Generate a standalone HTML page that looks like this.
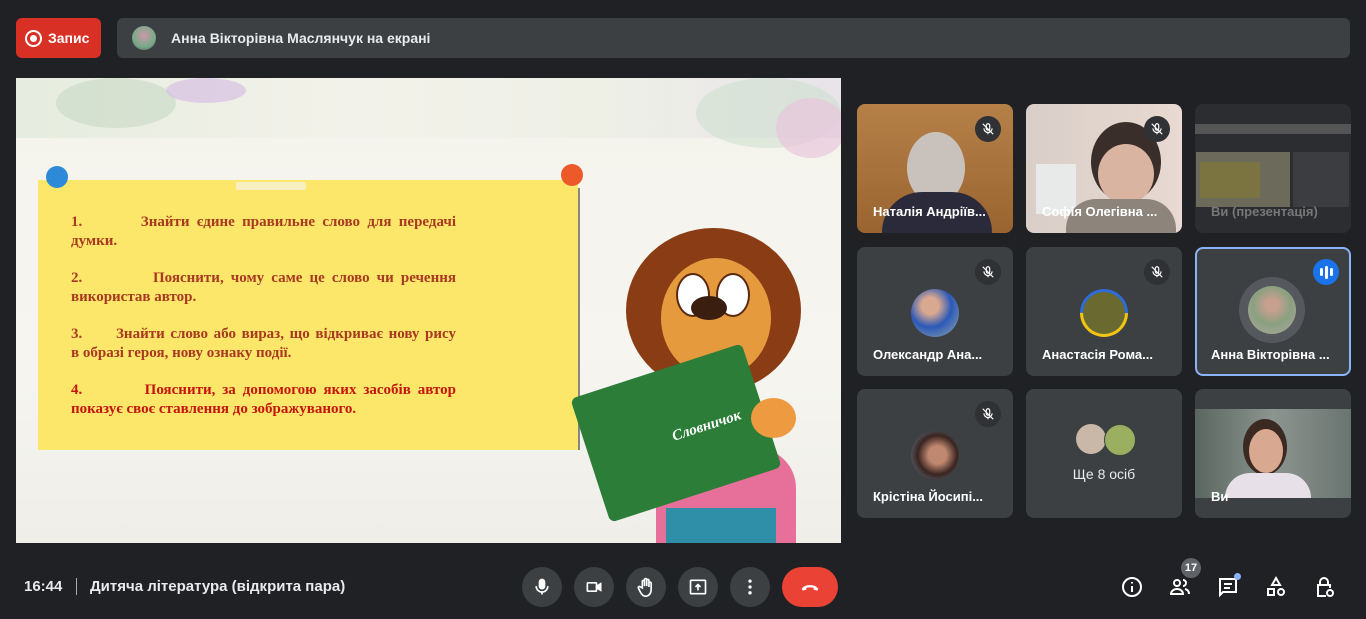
<!DOCTYPE html>
<html><head><meta charset="utf-8"><style>
*{margin:0;padding:0;box-sizing:border-box}
body{width:1366px;height:619px;background:#202124;font-family:"Liberation Sans",sans-serif;position:relative;overflow:hidden;color:#e8eaed}
.abs{position:absolute}
.rec{left:16px;top:18px;width:85px;height:40px;background:#d93025;border-radius:6px;color:#fff;font-weight:bold;font-size:14px;display:flex;align-items:center;padding-left:9px}
.rec i{width:17px;height:17px;border-radius:50%;border:2px solid #fff;display:inline-block;margin-right:6px;position:relative}
.rec i:after{content:"";position:absolute;left:3px;top:3px;width:7px;height:7px;border-radius:50%;background:#fff}
.banner{left:117px;top:18px;width:1233px;height:40px;background:#3c4043;border-radius:6px;display:flex;align-items:center;font-weight:bold;font-size:14px;color:#e8eaed}
.banner .av{width:24px;height:24px;border-radius:50%;background:radial-gradient(circle at 50% 40%,#c9a,#7a8 60%,#556);margin:0 15px}
.slide{left:16px;top:78px;width:825px;height:465px;background:linear-gradient(#f4f3ec,#f6f5f0 60%,#efeee9);overflow:hidden}
.note{left:22px;top:102px;width:540px;height:270px;background:#fde76a}
.shadow{left:540px;top:110px;width:24px;height:262px;background:linear-gradient(90deg,#fde76a,#777 60%,#888)}
.ln{font-family:"Liberation Serif",serif;font-weight:bold;font-size:15px;color:#a83a22;line-height:19px;position:absolute;left:55px;width:385px;white-space:nowrap}
.j{text-align:justify;text-align-last:justify;white-space:normal}
.tile{background:#3c4043;border-radius:8px;overflow:hidden;width:156px;height:129px}
.name{position:absolute;left:16px;bottom:14px;font-size:13px;font-weight:bold;color:#fff;white-space:nowrap}
.mute{position:absolute;right:12px;top:12px;width:26px;height:26px;border-radius:50%;background:#2f3134;display:flex;align-items:center;justify-content:center}
.avt{position:absolute;left:54px;top:42px;width:48px;height:48px;border-radius:50%}
.btn{width:40px;height:40px;border-radius:50%;background:#3c4043;top:567px;display:flex;align-items:center;justify-content:center}
.ico{top:575px;width:24px;height:24px}
</style></head><body>
<div class="abs rec"><i></i>Запис</div>
<div class="abs banner"><span class="av"></span>Анна Вікторівна Маслянчук на екрані</div>

<div class="abs slide">
 <div class="abs" style="left:0;top:0;width:825px;height:60px;background:linear-gradient(90deg,#e6ecdf,#f3f2ea 40%,#eef0e6 70%,#e8e4ea)"></div>
 <div class="abs" style="left:40px;top:0;width:120px;height:50px;border-radius:50%;background:#c8d9c4;opacity:.6"></div>
 <div class="abs" style="left:150px;top:0;width:80px;height:25px;border-radius:50%;background:#d7c0e2;opacity:.7"></div>
 <div class="abs" style="left:680px;top:0;width:145px;height:70px;border-radius:50%;background:#cfe0cf;opacity:.6"></div>
 <div class="abs" style="left:760px;top:20px;width:70px;height:60px;border-radius:50%;background:#e8c6dc;opacity:.7"></div>
 <div class="abs shadow"></div>
 <div class="abs note"></div>
 <div class="abs" style="left:220px;top:104px;width:70px;height:8px;background:#f8efc0;border-radius:2px"></div>
 <div class="abs" style="left:30px;top:88px;width:22px;height:22px;border-radius:50%;background:#2c8ad8"></div>
 <div class="abs" style="left:545px;top:86px;width:22px;height:22px;border-radius:50%;background:#ec5a2a"></div>
 <div class="ln j" style="top:135px">1.&nbsp;&nbsp;&nbsp;&nbsp;&nbsp;&nbsp;&nbsp; Знайти єдине правильне слово для передачі</div>
 <div class="ln" style="top:154px">думки.</div>
 <div class="ln j" style="top:191px">2.&nbsp;&nbsp;&nbsp;&nbsp;&nbsp;&nbsp;&nbsp;&nbsp;&nbsp; Пояснити, чому саме це слово чи речення</div>
 <div class="ln" style="top:210px">використав автор.</div>
 <div class="ln j" style="top:247px">3.&nbsp;&nbsp;&nbsp;&nbsp;&nbsp; Знайти слово або вираз, що відкриває нову рису</div>
 <div class="ln" style="top:266px">в образі героя, нову ознаку події.</div>
 <div class="ln j" style="top:303px;color:#c4160e">4.&nbsp;&nbsp;&nbsp;&nbsp;&nbsp;&nbsp;&nbsp;&nbsp; Пояснити, за допомогою яких засобів автор</div>
 <div class="ln" style="top:322px;color:#c4160e">показує своє ставлення до зображуваного.</div>
 <!-- lion -->
 <div class="abs" style="left:610px;top:150px;width:175px;height:165px;border-radius:50%;background:#8a3c14"></div>
 <div class="abs" style="left:645px;top:180px;width:110px;height:120px;border-radius:50%;background:#e59a3e"></div>
 <div class="abs" style="left:660px;top:195px;width:34px;height:44px;border-radius:50%;background:#fff;border:2px solid #5a2a10"></div>
 <div class="abs" style="left:700px;top:195px;width:34px;height:44px;border-radius:50%;background:#fff;border:2px solid #5a2a10"></div>
 <div class="abs" style="left:675px;top:218px;width:36px;height:24px;border-radius:50%;background:#3a1e10"></div>
 <div class="abs" style="left:640px;top:370px;width:140px;height:95px;border-radius:40px 40px 0 0;background:#e6709a"></div>
 <div class="abs" style="left:650px;top:430px;width:110px;height:40px;background:#2f8fa8"></div>
 <div class="abs" style="left:570px;top:290px;width:180px;height:130px;background:#2c7d38;transform:rotate(-18deg);border-radius:6px"></div>
 <div class="abs" style="left:655px;top:340px;font-family:'Liberation Serif',serif;font-style:italic;font-weight:bold;color:#fff;font-size:15px;transform:rotate(-18deg)">Словничок</div>
 <div class="abs" style="left:735px;top:320px;width:45px;height:40px;border-radius:50%;background:#ee9a40"></div>
</div>

<!-- tiles -->
<div class="abs tile" style="left:857px;top:104px;background:linear-gradient(#b58048,#9a6430)">
 <div class="abs" style="left:50px;top:28px;width:58px;height:72px;border-radius:50%;background:#c9c2bc"></div>
 <div class="abs" style="left:25px;top:88px;width:110px;height:50px;border-radius:40px 40px 0 0;background:#2a2a3a"></div>
 <div class="mute"><svg width="14" height="14" viewBox="0 0 24 24" fill="none" stroke="#fff" stroke-width="2"><rect x="9" y="3" width="6" height="11" rx="3"/><path d="M5 11a7 7 0 0014 0M12 18v3M3 3l18 18"/></svg></div>
 <div class="name">Наталія Андріїв...</div></div>
<div class="abs tile" style="left:1026px;top:104px;background:linear-gradient(90deg,#d9cfc8,#e8d9d2)">
 <div class="abs" style="left:10px;top:60px;width:40px;height:50px;background:#e8eaea"></div>
 <div class="abs" style="left:65px;top:18px;width:70px;height:80px;border-radius:50%;background:#3a2e2a"></div>
 <div class="abs" style="left:72px;top:40px;width:56px;height:60px;border-radius:50%;background:#d9b4a0"></div>
 <div class="abs" style="left:40px;top:95px;width:110px;height:40px;border-radius:30px 30px 0 0;background:#8d847c"></div>
 <div class="mute"><svg width="14" height="14" viewBox="0 0 24 24" fill="none" stroke="#fff" stroke-width="2"><rect x="9" y="3" width="6" height="11" rx="3"/><path d="M5 11a7 7 0 0014 0M12 18v3M3 3l18 18"/></svg></div>
 <div class="name">Софія Олегівна ...</div></div>
<div class="abs tile" style="left:1195px;top:104px;background:#2c2d30">
 <div class="abs" style="left:0;top:20px;width:156px;height:10px;background:#555"></div>
 <div class="abs" style="left:1px;top:48px;width:94px;height:55px;background:#6c6a5a"></div>
 <div class="abs" style="left:5px;top:58px;width:60px;height:36px;background:#7c7440"></div>
 <div class="abs" style="left:98px;top:48px;width:56px;height:55px;background:#3b3d40"></div>
 <div class="name" style="left:16px;color:#777">Ви (презентація)</div></div>

<div class="abs tile" style="left:857px;top:247px">
 <div class="mute"><svg width="14" height="14" viewBox="0 0 24 24" fill="none" stroke="#fff" stroke-width="2"><rect x="9" y="3" width="6" height="11" rx="3"/><path d="M5 11a7 7 0 0014 0M12 18v3M3 3l18 18"/></svg></div>
 <div class="avt" style="background:radial-gradient(circle at 40% 35%,#d9a890 20%,#2b59b8 50%,#9aa)"></div>
 <div class="name">Олександр Ана...</div></div>
<div class="abs tile" style="left:1026px;top:247px">
 <div class="mute"><svg width="14" height="14" viewBox="0 0 24 24" fill="none" stroke="#fff" stroke-width="2"><rect x="9" y="3" width="6" height="11" rx="3"/><path d="M5 11a7 7 0 0014 0M12 18v3M3 3l18 18"/></svg></div>
 <div class="avt" style="border:3px solid;border-color:#2e6ad8 #2e6ad8 #f1c40f #f1c40f;background:#6a6a30;transform:rotate(-45deg)"></div>
 <div class="name">Анастасія Рома...</div></div>
<div class="abs tile" style="left:1195px;top:247px;border:2px solid #8ab4f8">
 <div class="abs" style="left:42px;top:28px;width:66px;height:66px;border-radius:50%;background:#55585c"></div>
 <div class="abs" style="left:51px;top:37px;width:48px;height:48px;border-radius:50%;background:radial-gradient(circle at 50% 40%,#c8a090 15%,#8aa080 50%,#b0a8a0)"></div>
 <div class="abs" style="right:10px;top:10px;width:26px;height:26px;border-radius:50%;background:#1a73e8;display:flex;align-items:center;justify-content:center;gap:2px"><i style="width:3px;height:8px;background:#fff;border-radius:2px"></i><i style="width:3px;height:13px;background:#fff;border-radius:2px"></i><i style="width:3px;height:8px;background:#fff;border-radius:2px"></i></div>
 <div class="name" style="left:14px;bottom:12px">Анна Вікторівна ...</div></div>

<div class="abs tile" style="left:857px;top:389px">
 <div class="mute"><svg width="14" height="14" viewBox="0 0 24 24" fill="none" stroke="#fff" stroke-width="2"><rect x="9" y="3" width="6" height="11" rx="3"/><path d="M5 11a7 7 0 0014 0M12 18v3M3 3l18 18"/></svg></div>
 <div class="avt" style="background:radial-gradient(circle at 55% 50%,#c08870 25%,#3a2420 55%,#6a8aa0)"></div>
 <div class="name">Крістіна Йосипі...</div></div>
<div class="abs tile" style="left:1026px;top:389px">
 <div class="abs" style="left:50px;top:35px;width:30px;height:30px;border-radius:50%;background:#c9b8a8"></div>
 <div class="abs" style="left:78px;top:35px;width:32px;height:32px;border-radius:50%;background:#9ab060;border:1px solid #3c4043"></div>
 <div class="abs" style="left:0;width:156px;top:77px;text-align:center;font-size:14px;color:#e8eaed">Ще 8 осіб</div></div>
<div class="abs tile" style="left:1195px;top:389px">
 <div class="abs" style="left:0;top:20px;width:156px;height:89px;background:linear-gradient(90deg,#5a6660,#8c9590 50%,#6a7470)"></div>
 <div class="abs" style="left:48px;top:30px;width:44px;height:56px;border-radius:50%;background:#3a2a22"></div>
 <div class="abs" style="left:54px;top:40px;width:34px;height:44px;border-radius:50%;background:#d9a890"></div>
 <div class="abs" style="left:30px;top:84px;width:86px;height:25px;border-radius:30px 30px 0 0;background:#e8e0e8"></div>
 <div class="name" style="left:16px">Ви</div></div>

<!-- bottom -->
<div class="abs" style="left:24px;top:578px;font-size:15px;font-weight:bold;color:#e8eaed">16:44</div>
<div class="abs" style="left:76px;top:578px;width:1px;height:17px;background:#aaa"></div>
<div class="abs" style="left:90px;top:578px;font-size:15px;font-weight:bold;color:#e8eaed">Дитяча література (відкрита пара)</div>

<div class="abs btn" style="left:522px"><svg width="20" height="20" viewBox="0 0 24 24" fill="none" stroke="#fff" stroke-width="2"><rect x="9" y="3" width="6" height="11" rx="3" fill="#fff"/><path d="M5 11a7 7 0 0014 0M12 18v3"/></svg></div>
<div class="abs btn" style="left:574px"><svg width="20" height="20" viewBox="0 0 24 24" fill="none" stroke="#fff" stroke-width="2"><rect x="4" y="7" width="11" height="10" rx="1"/><path d="M15 11l5-3v8l-5-3z" fill="#fff"/></svg></div>
<div class="abs btn" style="left:626px"><svg width="22" height="22" viewBox="0 0 24 24" fill="none" stroke="#fff" stroke-width="1.8"><path d="M8 13V6a1.2 1.2 0 012.4 0v5V4a1.2 1.2 0 012.4 0v7V5a1.2 1.2 0 012.4 0v7V8a1.2 1.2 0 012.4 0v7c0 4-2.5 7-6 7-3 0-4.5-2-6-5l-2-4a1.2 1.2 0 012-1.2z"/></svg></div>
<div class="abs btn" style="left:678px"><svg width="20" height="20" viewBox="0 0 24 24" fill="none" stroke="#fff" stroke-width="2"><rect x="3" y="4" width="18" height="16" rx="1"/><path d="M12 16V9M9 12l3-3 3 3" /></svg></div>
<div class="abs btn" style="left:730px"><svg width="20" height="20" viewBox="0 0 24 24" fill="#fff"><circle cx="12" cy="5" r="2"/><circle cx="12" cy="12" r="2"/><circle cx="12" cy="19" r="2"/></svg></div>
<div class="abs btn" style="left:782px;width:56px;border-radius:20px;background:#ea4335"><svg width="22" height="22" viewBox="0 0 24 24" fill="#fff"><path d="M3 14c2-3 5.5-4 9-4s7 1 9 4l-1 2-4-1v-2c-2.6-.8-5.4-.8-8 0v2l-4 1z"/></svg></div>

<div class="abs ico" style="left:1120px"><svg width="24" height="24" viewBox="0 0 24 24" fill="none" stroke="#fff" stroke-width="2"><circle cx="12" cy="12" r="9"/><path d="M12 11v6M12 7v1.5"/></svg></div>
<div class="abs ico" style="left:1168px"><svg width="24" height="24" viewBox="0 0 24 24" fill="none" stroke="#fff" stroke-width="2"><circle cx="9" cy="8" r="3"/><path d="M3 19c0-3 3-5 6-5s6 2 6 5zM15 5a3 3 0 010 6M17 14c2 .5 4 2 4 5"/></svg></div>
<div class="abs" style="left:1181px;top:558px;width:20px;height:20px;border-radius:50%;background:#5f6368;font-size:11px;font-weight:bold;color:#fff;text-align:center;line-height:20px">17</div>
<div class="abs ico" style="left:1216px"><svg width="24" height="24" viewBox="0 0 24 24" fill="none" stroke="#fff" stroke-width="2"><path d="M4 4h16v13H7l-3 3z"/><path d="M8 9h8M8 13h6"/></svg></div>
<div class="abs" style="left:1234px;top:573px;width:7px;height:7px;border-radius:50%;background:#8ab4f8"></div>
<div class="abs ico" style="left:1264px"><svg width="24" height="24" viewBox="0 0 24 24" fill="none" stroke="#fff" stroke-width="2"><path d="M12 3l4 7H8z"/><rect x="4" y="14" width="6" height="6"/><circle cx="17" cy="17" r="3"/></svg></div>
<div class="abs ico" style="left:1312px"><svg width="24" height="24" viewBox="0 0 24 24" fill="none" stroke="#fff" stroke-width="2"><path d="M8 10V7a4 4 0 018 0v3M14 21H6V10h12v3"/><circle cx="18" cy="18" r="3"/></svg></div>
</body></html>
